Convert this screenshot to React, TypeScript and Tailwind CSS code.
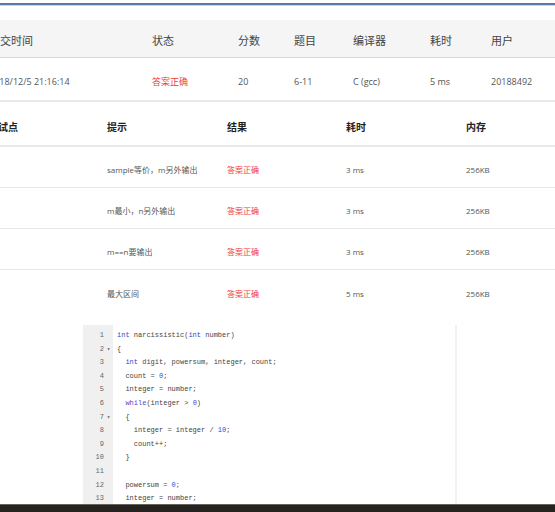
import React from 'react';

const font = { fontFamily: '"Open Sans", "Noto Sans CJK SC", sans-serif' };

const headCols = [
  { label: '提交时间', w: 'w-[163px]' },
  { label: '状态', w: 'w-[86px]' },
  { label: '分数', w: 'w-[56px]' },
  { label: '题目', w: 'w-[59px]' },
  { label: '编译器', w: 'w-[77px]' },
  { label: '耗时', w: 'w-[61px]' },
  { label: '用户', w: 'flex-1' },
];

const summary = ['2018/12/5 21:16:14', '答案正确', '20', '6-11', 'C (gcc)', '5 ms', '20188492'];

const caseCols = [
  { label: '测试点', w: 'w-[119px]' },
  { label: '提示', w: 'w-[120px]' },
  { label: '结果', w: 'w-[119px]' },
  { label: '耗时', w: 'w-[120px]' },
  { label: '内存', w: 'flex-1' },
];

const cases = [
  { id: '0', hint: 'sample等价，m另外输出', time: '3 ms', mem: '256KB' },
  { id: '1', hint: 'm最小，n另外输出', time: '3 ms', mem: '256KB' },
  { id: '2', hint: 'm==n要输出', time: '3 ms', mem: '256KB' },
  { id: '3', hint: '最大区间', time: '5 ms', mem: '256KB' },
];

type Tok = [string, string?];

const KW = 'text-[#3046c9]';
const CTRL = 'text-[#5a3fbf]';
const NUM = 'text-[#2a48d6]';

const code: { fold?: boolean; toks: Tok[] }[] = [
  { toks: [['int', KW], [' narcissistic('], ['int', KW], [' number)']] },
  { fold: true, toks: [['{']] },
  { toks: [['  '], ['int', KW], [' digit, powersum, integer, count;']] },
  { toks: [['  count = '], ['0', NUM], [';']] },
  { toks: [['  integer = number;']] },
  { toks: [['  '], ['while', CTRL], ['(integer > '], ['0', NUM], [')']] },
  { fold: true, toks: [['  {']] },
  { toks: [['    integer = integer / '], ['10', NUM], [';']] },
  { toks: [['    count++;']] },
  { toks: [['  }']] },
  { toks: [['']] },
  { toks: [['  powersum = '], ['0', NUM], [';']] },
  { toks: [['  integer = number;']] },
  { toks: [['  digit = integer % '], ['10', NUM], [';']] },
];

export default function App() {
  return (
    <div className="w-[555px] h-[512px] overflow-hidden bg-white flex flex-col" style={font}>
      <div className="mt-[3px] h-[2px] bg-[#5a7aa1]" />
      <div className="h-px bg-[#c9d6e5]" />
      <div className="h-[14px]" />

      {/* submission summary */}
      <div className="-ml-[11px] flex flex-col">
        <div className="flex items-center h-[38px] pt-[6px] bg-[#f5f5f5] border-b border-[#d9d9d9] text-[11px] text-[#444]">
          {headCols.map((c) => (
            <div key={c.label} className={`${c.w} whitespace-nowrap`}>{c.label}</div>
          ))}
        </div>
        <div className="flex items-center h-[44px] pt-[5px] border-b-2 border-[#e8e8e8] text-[9px] text-[#555]">
          {summary.map((v, i) => (
            <div
              key={i}
              className={`${headCols[i].w} whitespace-nowrap ${i === 1 ? 'text-[#f0393b]' : ''}`}
            >
              {v}
            </div>
          ))}
        </div>
      </div>

      {/* test cases */}
      <div className="-ml-[12px] flex flex-col">
        <div className="flex items-center h-[45px] pt-[8px] border-b-2 border-[#e8e8e8] text-[10px] font-semibold text-[#222]">
          {caseCols.map((c) => (
            <div key={c.label} className={`${c.w} whitespace-nowrap`}>{c.label}</div>
          ))}
        </div>
        {cases.map((r, i) => (
          <div
            key={r.id}
            className={`flex items-center h-[41px] pt-[6px] text-[#555] ${i < cases.length - 1 ? 'border-b border-[#e6e6e6]' : ''}`}
          >
            <div className="w-[119px]" />
            <div className="w-[120px] text-[8px] whitespace-nowrap">{r.hint}</div>
            <div className="w-[119px] text-[8px] text-[#f0393b]">答案正确</div>
            <div className="w-[120px] text-[8px]">{r.time}</div>
            <div className="flex-1 text-[8px]">{r.mem}</div>
          </div>
        ))}
      </div>

      {/* code viewer */}
      <div className="mt-[14px] ml-[83px] flex h-[179px] overflow-hidden">
        <div
          className="w-[30px] bg-[#f0f0f0] pt-[4px] text-[7px] leading-[13.6px] text-[#666]"
          style={{ fontFamily: '"Liberation Mono", monospace' }}
        >
          {code.map((l, i) => (
            <div key={i} className="flex">
              <span className="w-[21px] text-right">{i + 1}</span>
              <span className="w-[9px] text-center text-[6px]">{l.fold ? '▾' : ''}</span>
            </div>
          ))}
        </div>
        <div
          className="w-[344px] border-r-2 border-[#f2f2f2] pl-[4px] pt-[4px] text-[7px] leading-[13.6px] text-[#444] whitespace-pre"
          style={{ fontFamily: '"Liberation Mono", monospace' }}
        >
          {code.map((l, i) => (
            <div key={i}>
              {l.toks.map((t, j) => (
                <span key={j} className={t[1] ?? ''}>{t[0]}</span>
              ))}
              {l.toks.length === 1 && l.toks[0][0] === '' ? ' ' : ''}
            </div>
          ))}
        </div>
      </div>

      <div className="flex-1 border-t border-[#6a645d] bg-[#26221f]" />
    </div>
  );
}
